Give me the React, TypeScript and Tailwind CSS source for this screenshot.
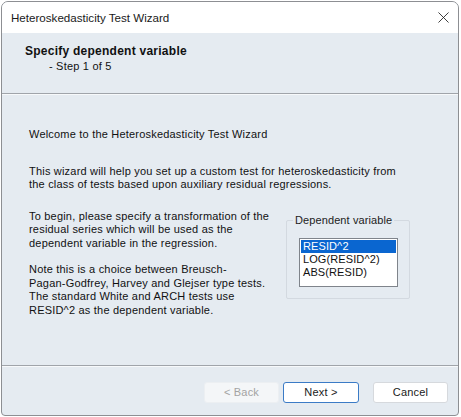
import { X } from 'lucide-react';

const body = "font-['Liberation_Sans',Arial,sans-serif] text-[11px] leading-[13.5px] tracking-[0.2px] text-[#111]";

function WizardButton({ label, primary, disabled, className = '' }: { label: string; primary?: boolean; disabled?: boolean; className?: string }) {
  if (disabled) {
    return (
      <div className={`w-[75px] h-[21px] rounded-[3px] bg-[#f4f6f8] border border-[#eceff2] flex items-center justify-center text-[#a3a3a3] ${className}`}>
        {label}
      </div>
    );
  }
  return (
    <div
      className={`w-[75px] h-[21px] rounded-[3px] bg-white flex items-center justify-center text-[#1a1a1a] ${
        primary ? 'border border-[#3b7bc6]' : 'border border-[#d6d9dd]'
      } ${className}`}
    >
      {label}
    </div>
  );
}

export default function App() {
  return (
    <div className="w-[461px] h-[417px] bg-white pl-[1px] pt-[1px]">
      <div className="w-[458px] h-[415px] border border-[#8d8f93] rounded-t-[7px] rounded-b-[4px] overflow-hidden flex flex-col bg-[#e5ebf1]">
        {/* Title bar */}
        <div className="h-[31px] bg-white flex items-center justify-between pl-[9px] pr-[5px] shrink-0">
          <span className="font-['Liberation_Sans',Arial,sans-serif] text-[11.6px] text-[#1a1a1a]">
            Heteroskedasticity Test Wizard
          </span>
          <X className="w-[19px] h-[19px] text-[#222]" strokeWidth={1.1} />
        </div>

        {/* Header */}
        <div className={`h-[60px] shrink-0 pl-[23px] pt-[12px] ${body}`}>
          <div className="font-bold text-[12px] tracking-[0.25px] text-[#111]">Specify dependent variable</div>
          <div className="pl-[24px] mt-[1px]">- Step 1 of 5</div>
        </div>
        <div className="h-[1px] bg-[#a0a4aa] shrink-0" />
        <div className="h-[1px] bg-[#f7f9fb] shrink-0" />

        {/* Body */}
        <div className={`flex-1 pl-[27px] pt-[33px] ${body}`}>
          <p>Welcome to the Heteroskedasticity Test Wizard</p>
          <p className="mt-[23px]">
            This wizard will help you set up a custom test for heteroskedasticity from
            <br />
            the class of tests based upon auxiliary residual regressions.
          </p>
          <div className="flex mt-[18px]">
            <div className="w-[257px] shrink-0">
              <p>
                To begin, please specify a transformation of the
                <br />
                residual series which will be used as the
                <br />
                dependent variable in the regression.
              </p>
              <p className="mt-[13px]">
                Note this is a choice between Breusch-
                <br />
                Pagan-Godfrey, Harvey and Glejser type tests.
                <br />
                The standard White and ARCH tests use
                <br />
                RESID^2 as the dependent variable.
              </p>
            </div>
            <div className="relative mt-[10px] w-[124px] h-[79px] border border-[#d3d9e0] rounded-[2px]">
              <span className="absolute -top-[7px] left-[6px] px-[2px] bg-[#e5ebf1] text-[#222] tracking-[0.1px]">
                Dependent variable
              </span>
              <div className="absolute left-[12px] top-[17px] w-[99px] h-[49px] border border-[#7f848b] bg-white p-[1px] tracking-[0.1px]">
                <div className="h-[13px] bg-[#0a66d0] text-white pl-[2px] leading-[13px]">RESID^2</div>
                <div className="h-[13px] pl-[2px] leading-[13px]">LOG(RESID^2)</div>
                <div className="h-[13px] pl-[2px] leading-[13px]">ABS(RESID)</div>
              </div>
            </div>
          </div>
        </div>

        <div className="h-[1px] bg-[#a0a4aa] shrink-0" />
        <div className="h-[1px] bg-[#f7f9fb] shrink-0" />

        {/* Buttons */}
        <div className={`h-[48px] shrink-0 flex justify-end items-start pt-[15px] pr-[10px] ${body}`}>
          <WizardButton label="< Back" disabled className="mr-[4px]" />
          <WizardButton label="Next >" primary className="w-[76px] mr-[14px]" />
          <WizardButton label="Cancel" />
        </div>
      </div>
    </div>
  );
}
